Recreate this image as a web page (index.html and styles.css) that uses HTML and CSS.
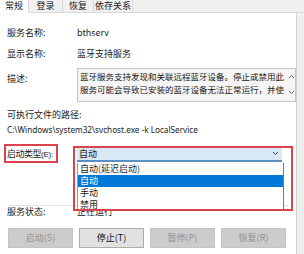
FILE: index.html
```html
<!DOCTYPE html>
<html>
<head>
<meta charset="utf-8">
<link rel="stylesheet" href="styles.css">
</head>
<body>
<div class="win">
  <div class="tabs">
    <div class="tab active">常规</div>
    <div class="tab">登录</div>
    <div class="tab">恢复</div>
    <div class="tab">依存关系</div>
    <div class="tab-fill"></div>
  </div>
  <div class="panel">
    <div class="row r1"><span class="lbl">服务名称:</span><span class="val">bthserv</span></div>
    <div class="row r2"><span class="lbl">显示名称:</span><span class="val">蓝牙支持服务</span></div>
    <div class="row r3">
      <span class="lbl lbl-desc">描述:</span>
      <div class="desc">
        <div class="desc-text">蓝牙服务支持发现和关联远程蓝牙设备。停止或禁用此<br>服务可能会导致已安装的蓝牙设备无法正常运行，并使</div>
        <div class="scroll">
          <svg width="7" height="5" viewBox="0 0 7 5"><path d="M1 4 L3.5 1.5 L6 4" fill="none" stroke="#606060" stroke-width="1"/></svg>
          <svg width="7" height="5" viewBox="0 0 7 5"><path d="M1 1 L3.5 3.5 L6 1" fill="none" stroke="#606060" stroke-width="1"/></svg>
        </div>
      </div>
    </div>
    <div class="path-label">可执行文件的路径:</div>
    <div class="path">C:\Windows\system32\svchost.exe -k LocalService</div>
    <div class="row r6">
      <span class="lbl lbl-start">启动类型<span class="latin">(E):</span></span>
      <div class="combo">
        <span>自动</span>
        <svg width="7" height="5" viewBox="0 0 7 5"><path d="M1 1 L3.5 3.5 L6 1" fill="none" stroke="#404040" stroke-width="1"/></svg>
      </div>
    </div>
    <div class="sep"></div>
    <div class="row r7"><span class="lbl">服务状态:</span><span class="val">正在运行</span></div>
    <div class="buttons">
      <div class="btn disabled">启动(S)</div>
      <div class="btn">停止(T)</div>
      <div class="btn disabled">暂停(P)</div>
      <div class="btn disabled">恢复(R)</div>
    </div>

    <div class="list">
      <div class="item">自动(延迟启动)</div>
      <div class="item selected">自动</div>
      <div class="item">手动</div>
      <div class="item">禁用</div>
    </div>
    <div class="mark mark-label"></div>
    <div class="mark mark-combo"></div>
  </div>
</div>
</body>
</html>
```
FILE: styles.css
```css
html, body {
  margin: 0;
  padding: 0;
}
body {
  width: 304px;
  height: 254px;
  overflow: hidden;
  background: #f0f0f0;
  font-family: "Noto Sans CJK SC", "Noto Sans", sans-serif;
  font-size: 9px;
  color: #1a1a1a;
}
.win {
  width: 304px;
  height: 254px;
  display: flex;
  flex-direction: column;
}
.tabs {
  height: 13px;
  display: flex;
  flex: none;
}
.tab {
  height: 12px;
  line-height: 12px;
  text-align: center;
  background: #f0f0f0;
  border-right: 1px solid #d9d9d9;
  border-bottom: 1px solid #d9d9d9;
}
.tab:nth-child(1) { width: 28px; }
.tab:nth-child(2) { width: 33px; }
.tab:nth-child(3) { width: 30px; }
.tab:nth-child(4) { width: 38px; }
.tab.active {
  background: #fff;
  border-bottom-color: #fff;
}
.tab-fill {
  flex: 1;
  border-bottom: 1px solid #d9d9d9;
}
.panel {
  position: relative;
  width: 296px;
  flex: 1;
  background: #fff;
  border-right: 1px solid #d0d0d0;
  padding-top: 14px;
  display: flex;
  flex-direction: column;
}
.row {
  display: flex;
  align-items: center;
  padding-left: 7px;
}
.lbl {
  width: 70px;
  flex: none;
  line-height: 12px;
}
.lbl-start {
  letter-spacing: -0.5px;
}
.latin {
  font-family: "Liberation Sans", sans-serif;
  font-size: 8px;
  letter-spacing: -0.2px;
}
.val {
  line-height: 12px;
}
.r1 { height: 12px; }
.r2 { height: 12px; margin-top: 9px; }
.r3 {
  margin-top: 8px;
  align-items: flex-start;
}
.lbl-desc {
  margin-top: 5px;
}
.desc {
  width: 218px;
  height: 32px;
  border: 1px solid #c4c4c4;
  background: #f5f5f5;
  display: flex;
}
.desc-text {
  flex: 1;
  min-width: 0;
  padding: 1px 0 0 2px;
  line-height: 13px;
  font-size: 8.5px;
  white-space: nowrap;
  overflow: hidden;
}
.scroll {
  width: 8px;
  flex: none;
  display: flex;
  flex-direction: column;
  justify-content: space-between;
  align-items: center;
  padding: 5px 0 6px;
}
.path-label {
  margin-top: 7px;
  padding-left: 7px;
  line-height: 12px;
}
.path {
  margin-top: 3px;
  padding-left: 7px;
  line-height: 12px;
  font-family: "Noto Sans", sans-serif;
  font-size: 8.2px;
}
.r6 {
  margin-top: 11px;
  height: 15px;
}
.combo {
  width: 200px;
  height: 13px;
  background: #d8e8f6;
  border-bottom: 2px solid #5a8fc4;
  display: flex;
  align-items: center;
  justify-content: space-between;
  padding: 0 3px 0 2px;
}
.sep {
  margin: 43px 8px 0 8px;
  height: 1px;
  background: #e2e2e2;
}
.r7 {
  height: 12px;
}
.buttons {
  margin-top: 10px;
  padding-left: 8px;
  display: flex;
  gap: 6px;
}
.btn {
  width: 63px;
  height: 18px;
  line-height: 18px;
  text-align: center;
  background: #e1e1e1;
  border: 1px solid #adadad;
  color: #111;
}
.btn.disabled {
  background: #cccccc;
  border-color: #c4c4c4;
  color: #939393;
}
.list {
  position: absolute;
  left: 77px;
  top: 150px;
  width: 205px;
  height: 48px;
  background: #fff;
  border-right: 1px solid #7a7a7a;
  border-left: 1px solid #9a9a9a;
}
.item {
  height: 12px;
  line-height: 12px;
  padding-left: 2px;
}
.item.selected {
  background: #0078d7;
  color: #fff;
}
.mark {
  position: absolute;
  border: 2px solid #d9434b;
  box-sizing: border-box;
}
.mark-label {
  left: 4px;
  top: 131px;
  width: 54px;
  height: 19px;
}
.mark-combo {
  left: 73px;
  top: 133px;
  width: 220px;
  height: 65px;
}
```
